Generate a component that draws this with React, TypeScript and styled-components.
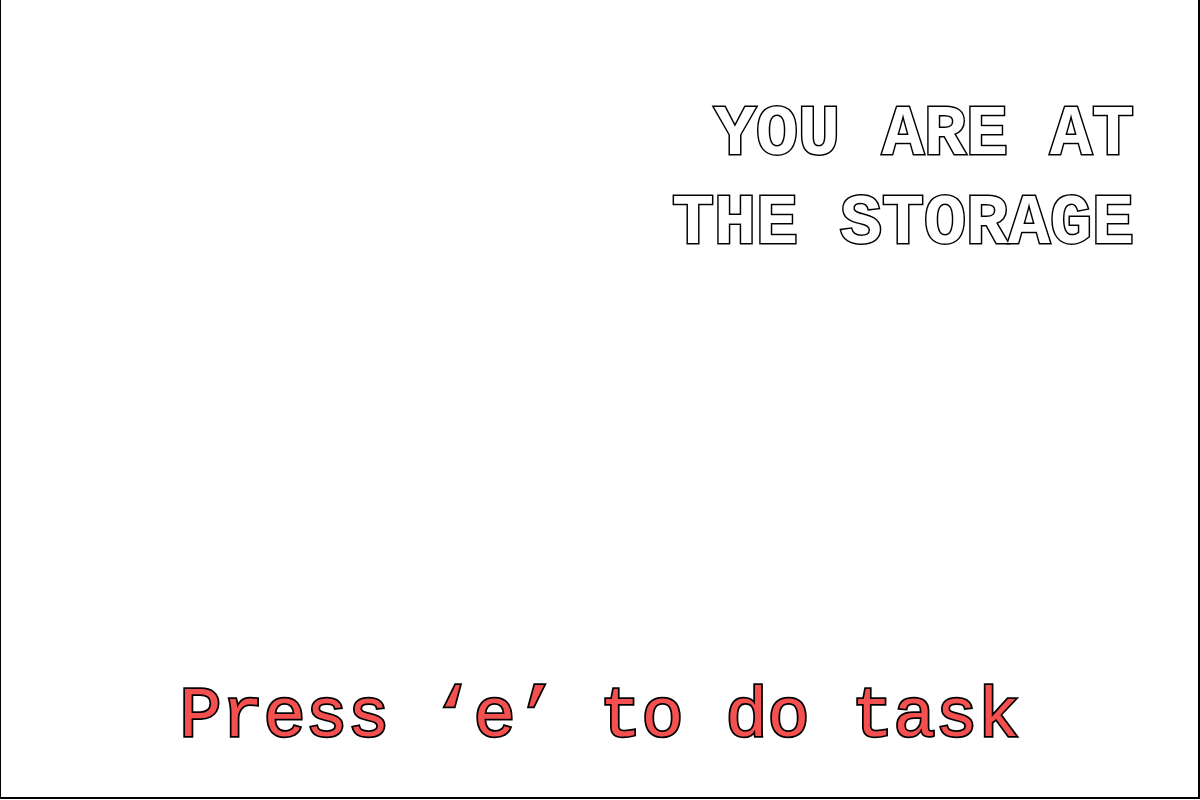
import React from "react";
import styled, { createGlobalStyle } from "styled-components";

const GlobalStyle = createGlobalStyle`
  html, body {
    margin: 0;
    padding: 0;
    background: #ffffff;
    overflow: hidden;
  }
`;

const Frame = styled.div`
  box-sizing: border-box;
  width: 1201px;
  height: 801px;
  margin: -2px 0 0 -1px;
  border: 2px solid #000;
  display: flex;
  flex-direction: column;
  justify-content: space-between;
  font-family: "Liberation Mono", "DejaVu Sans Mono", monospace;
`;

const Location = styled.h1`
  margin: 0;
  padding: 91px 64px 0 0;
  text-align: right;
  font-size: 70px;
  font-weight: 700;
  line-height: 89px;
  color: #fff;
  -webkit-text-stroke: 3px #000;
  paint-order: stroke fill;
`;

const Prompt = styled.div`
  padding-bottom: 39px;
  text-align: center;
  font-size: 70px;
  font-weight: 400;
  line-height: 80px;
  color: #f55050;
  -webkit-text-stroke: 3.5px #000;
  paint-order: stroke fill;
`;

export default function App() {
  return (
    <>
      <GlobalStyle />
      <Frame>
        <Location>
          YOU ARE AT
          <br />
          THE STORAGE
        </Location>
        <Prompt>Press ‘e’ to do task</Prompt>
      </Frame>
    </>
  );
}
